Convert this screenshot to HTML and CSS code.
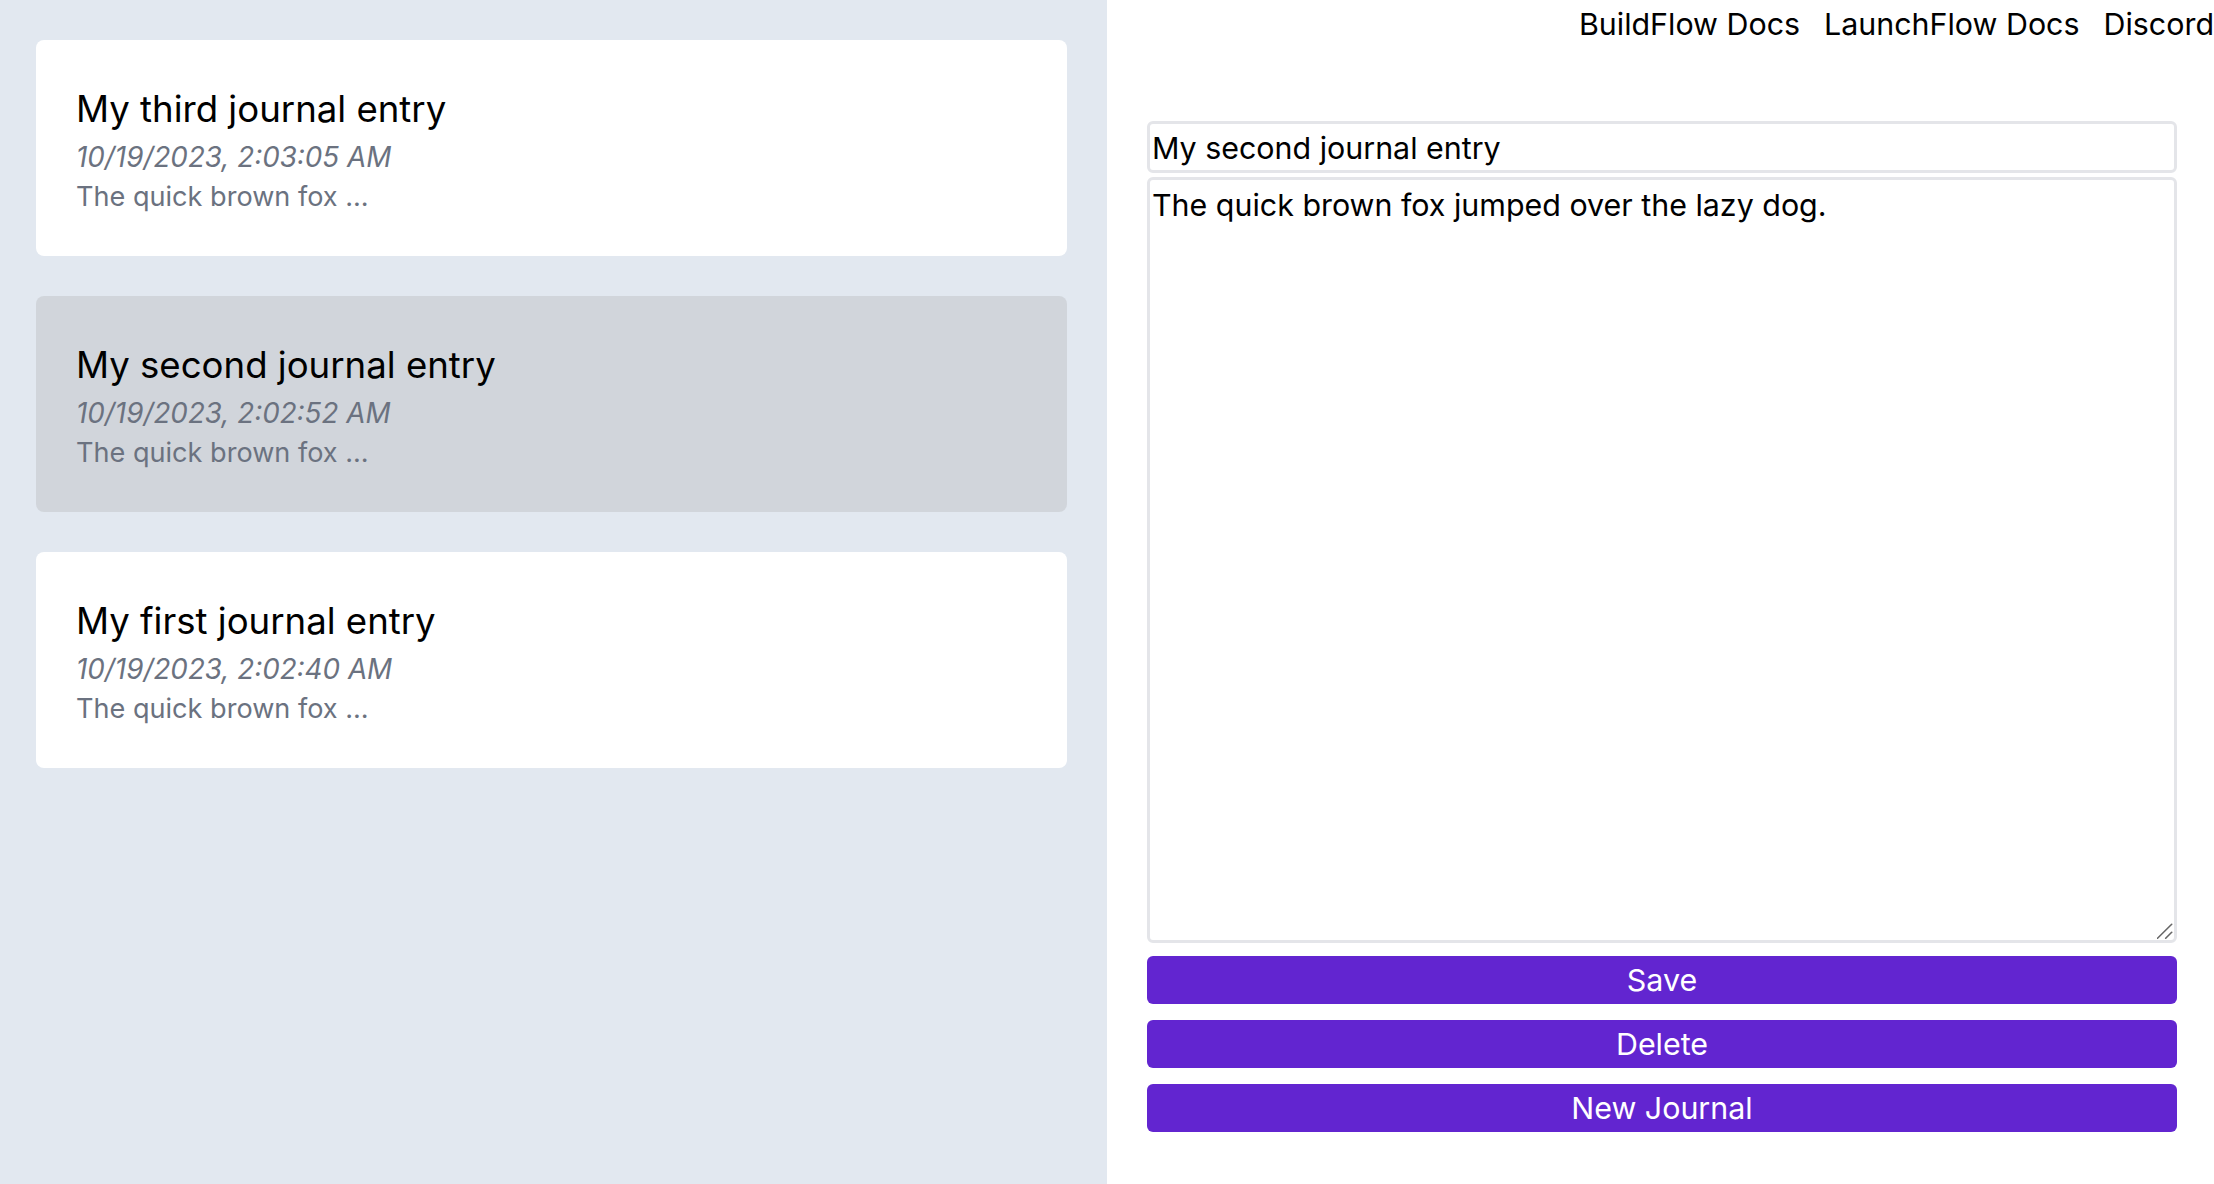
FILE: index.html
```html
<!DOCTYPE html>
<html lang="en">
<head>
<meta charset="utf-8">
<title>Journal</title>
<link rel="stylesheet" href="styles.css">
</head>
<body>
<div class="app">
  <aside class="sidebar">
    <div class="entry">
      <div class="entry-title">My third journal entry</div>
      <div class="entry-date">10/19/2023, 2:03:05 AM</div>
      <div class="entry-preview">The quick brown fox ...</div>
    </div>
    <div class="entry selected">
      <div class="entry-title">My second journal entry</div>
      <div class="entry-date">10/19/2023, 2:02:52 AM</div>
      <div class="entry-preview">The quick brown fox ...</div>
    </div>
    <div class="entry">
      <div class="entry-title">My first journal entry</div>
      <div class="entry-date">10/19/2023, 2:02:40 AM</div>
      <div class="entry-preview">The quick brown fox ...</div>
    </div>
  </aside>
  <main class="main">
    <nav class="nav">
      <a class="nav-link" href="#">BuildFlow Docs</a>
      <a class="nav-link" href="#">LaunchFlow Docs</a>
      <a class="nav-link" href="#">Discord</a>
    </nav>
    <form class="editor">
      <input class="title-input" type="text" value="My second journal entry">
      <div class="body-wrap">
        <textarea class="body-input">The quick brown fox jumped over the lazy dog.</textarea>
        <svg class="grip" width="16" height="16" viewBox="0 0 16 16" aria-hidden="true">
          <line x1="0.5" y1="15.3" x2="14.7" y2="1.3"/>
          <line x1="8.7" y1="15.3" x2="14.7" y2="9.3"/>
        </svg>
      </div>
      <div class="actions">
        <button class="btn" type="button">Save</button>
        <button class="btn" type="button">Delete</button>
        <button class="btn" type="button">New Journal</button>
      </div>
    </form>
  </main>
</div>
</body>
</html>
```

FILE: styles.css
```css
* {
  box-sizing: border-box;
}

html, body {
  margin: 0;
  padding: 0;
  height: 100%;
  overflow: hidden;
}

body {
  font-family: Inter, "Noto Sans", sans-serif;
  color: #000;
  background: #fff;
}

.app {
  display: flex;
  height: 1184px;
}

.sidebar {
  width: 1107px;
  flex: none;
  background: #e2e8f0;
  padding: 40px 40px 0 36px;
  display: flex;
  flex-direction: column;
  gap: 40px;
}

.entry {
  background: #fff;
  border-radius: 8px;
  padding: 41px 40px 39px;
  height: 216px;
}

.entry.selected {
  background: #d1d5db;
}

.entry-title {
  font-size: 36.6px;
  line-height: 56px;
  color: #000;
}

.entry-date {
  font-size: 27.8px;
  line-height: 40px;
  font-style: italic;
  color: #6b7280;
}

.entry-preview {
  font-size: 27.1px;
  line-height: 40px;
  color: #6b7280;
}

.main {
  flex: 1;
  display: flex;
  flex-direction: column;
  padding: 0 37px 0 40px;
}

.nav {
  display: flex;
  justify-content: flex-end;
  gap: 24px;
  height: 48px;
  margin-right: -37px;
  align-items: center;
}

.nav-link {
  font-size: 30.4px;
  color: #000;
  text-decoration: none;
  white-space: nowrap;
}

.editor {
  margin-top: 73px;
  display: flex;
  flex-direction: column;
}

.title-input {
  font-family: inherit;
  font-size: 30.4px;
  height: 52px;
  width: 100%;
  border: 3px solid #e4e5e9;
  border-radius: 6px;
  padding: 1px 2px 0;
  color: #000;
  outline: none;
}

.body-wrap {
  position: relative;
  margin-top: 4px;
}

.body-input {
  display: block;
  font-family: inherit;
  font-size: 30.4px;
  line-height: 1.25;
  height: 766px;
  width: 100%;
  border: 3px solid #e4e5e9;
  border-radius: 6px;
  padding: 6px 2px;
  color: #000;
  resize: none;
  outline: none;
}

.grip {
  position: absolute;
  right: 4px;
  bottom: 4px;
  stroke: #666;
  stroke-width: 1.6;
  stroke-linecap: round;
  pointer-events: none;
}

.actions {
  margin-top: 13px;
  display: flex;
  flex-direction: column;
  gap: 16px;
}

.btn {
  font-family: inherit;
  font-size: 30.4px;
  height: 48px;
  width: 100%;
  border: none;
  border-radius: 6px;
  background: #6225d0;
  color: #fff;
  cursor: pointer;
  padding: 0;
}
```
